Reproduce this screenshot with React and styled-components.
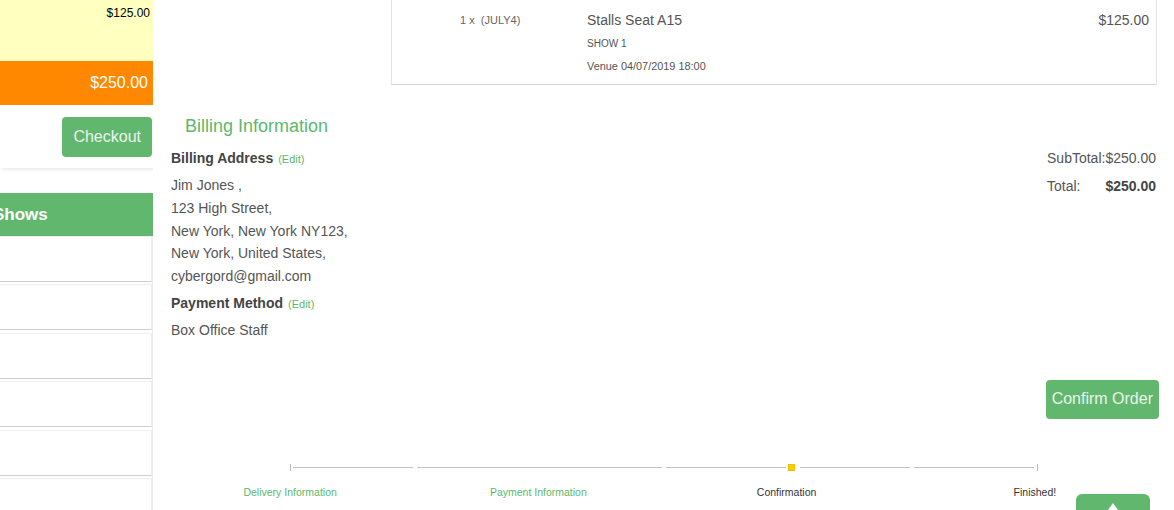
import React from 'react';
import styled, { createGlobalStyle } from 'styled-components';

const Global = createGlobalStyle`
  html, body { margin: 0; padding: 0; background: #fff; }
  body {
    font-family: "Liberation Sans", Arial, sans-serif;
    color: #555;
    overflow: hidden;
  }
  * { box-sizing: border-box; }
`;

const GREEN = '#62b76e';

const Page = styled.div`
  display: flex;
  width: 1174px;
  height: 510px;
  overflow: hidden;
`;

/* ---------- Sidebar ---------- */
const Sidebar = styled.aside`
  width: 153px;
  flex-shrink: 0;
  display: flex;
  flex-direction: column;
  overflow: hidden;
  & > * { flex-shrink: 0; }
`;

const CartLine = styled.div`
  height: 61px;
  background: #ffffc0;
  color: #000;
  font-size: 12px;
  line-height: 14px;
  text-align: right;
  padding: 6px 3px 0 0;
`;

const TotalBar = styled.div`
  height: 44px;
  background: #ff8800;
  color: #fff;
  font-size: 16px;
  display: flex;
  align-items: center;
  justify-content: flex-end;
  padding-right: 5px;
`;

const CheckoutBox = styled.div`
  height: 63px;
  display: flex;
  justify-content: flex-end;
  align-items: flex-start;
  padding: 12px 1px 0 0;
  box-shadow: 2px 2px 3px rgba(0, 0, 0, 0.08);
`;

const GreenButton = styled.button`
  background: ${GREEN};
  color: #eaf5ec;
  border: none;
  border-radius: 4px;
  font-family: "Liberation Sans", Arial, sans-serif;
  font-size: 16px;
  height: ${(p) => p.$h || 40}px;
  padding: 0 ${(p) => p.$px || 10}px;
  cursor: pointer;
`;

const ShowsHeader = styled.div`
  margin-top: 25px;
  height: 43px;
  background: ${GREEN};
  color: #fff;
  font-weight: bold;
  font-size: 17px;
  display: flex;
  align-items: center;
  span { margin-left: -7px; }
`;

const ShowList = styled.div`
  display: flex;
  flex-direction: column;
  border-right: 1px solid #ececec;
`;

const ShowItem = styled.div`
  height: 46px;
  flex-shrink: 0;
  background: #fff;
  border: 1px solid #efefef;
  border-bottom: 1px solid #cfcfcf;
  border-left: none;
  margin-bottom: 2.4px;
`;

/* ---------- Main ---------- */
const Main = styled.main`
  flex: 1;
  padding: 0 15px 0 13px;
  display: flex;
  flex-direction: column;
`;

const OrderCard = styled.div`
  margin-left: 225px;
  margin-right: 2px;
  height: 85px;
  border: 1px solid #e3e3e3;
  border-top: none;
  border-bottom-color: #d4d4d4;
  display: grid;
  grid-template-columns: 195px 1fr auto;
  padding-top: 12px;
`;

const Qty = styled.div`
  padding-left: 68px;
  margin-top: 2px;
  font-size: 11px;
  line-height: 13px;
  color: #666;
  white-space: pre;
`;

const ItemInfo = styled.div`
  display: flex;
  flex-direction: column;
`;

const ItemTitle = styled.div`
  font-size: 14px;
  line-height: 16px;
  color: #555;
`;

const ItemMeta = styled.div`
  font-size: ${(p) => p.$size}px;
  line-height: ${(p) => p.$lh}px;
  margin-top: ${(p) => p.$mt}px;
  color: #555;
`;

const ItemPrice = styled.div`
  font-size: 14px;
  line-height: 16px;
  padding-right: 7px;
  color: #555;
`;

const BillingRow = styled.div`
  display: flex;
  justify-content: space-between;
  margin-top: 31px;
`;

const BillingCol = styled.div`
  padding-left: 5px;
  display: flex;
  flex-direction: column;
`;

const SectionTitle = styled.h2`
  margin: 0 0 12px 14px;
  font-size: 18px;
  line-height: 20px;
  font-weight: normal;
  color: #5cb86c;
`;

const Label = styled.div`
  font-size: 14px;
  line-height: 20px;
  font-weight: bold;
  color: #444;
  margin-top: ${(p) => p.$mt || 0}px;
`;

const EditLink = styled.a`
  font-size: 11px;
  font-weight: normal;
  color: #5cb86c;
  margin-left: 5px;
  text-decoration: none;
`;

const Lines = styled.div`
  margin-top: 5px;
  font-size: 14px;
  line-height: 22.75px;
  color: #555;
`;

const Totals = styled.div`
  margin-right: 3px;
  padding-top: 32px;
  display: flex;
  flex-direction: column;
  gap: 8px;
  font-size: 14px;
  line-height: 20px;
  color: #555;
`;

const TotalLine = styled.div`
  display: flex;
  justify-content: space-between;
  b { color: #444; }
`;

const ConfirmRow = styled.div`
  display: flex;
  justify-content: flex-end;
  margin-top: 38px;
`;

const Progress = styled.div`
  margin-top: 45px;
  display: grid;
  grid-template-columns: repeat(4, 1fr);
`;

const Step = styled.div`
  display: flex;
  flex-direction: column;
  align-items: stretch;
`;

const Track = styled.div`
  height: 7px;
  display: flex;
  align-items: center;
  padding: 0 1px 0 3px;
`;

const Segment = styled.div`
  flex: ${(p) => p.$grow || 1};
  height: 1px;
  background: ${(p) => (p.$hidden ? 'transparent' : '#bcc2d1')};
`;

const Tick = styled.div`
  width: 1px;
  height: 7px;
  background: #bbb;
  margin: ${(p) => (p.$end ? '0 0 0 3px' : '0 2px 0 0')};
`;

const Current = styled.div`
  width: 7px;
  height: 7px;
  background: #ffcc00;
  border: 1px solid #f0bd00;
  margin: 0 5px 0 2px;
`;

const StepLabel = styled.div`
  margin-top: 15px;
  text-align: center;
  font-size: 10.5px;
  line-height: 12px;
  color: ${(p) => (p.$done ? '#5cb86c' : '#333')};
`;

const TopButton = styled.button`
  position: fixed;
  right: 24px;
  bottom: -24px;
  width: 74px;
  height: 40px;
  border: none;
  border-radius: 6px;
  background: ${GREEN};
  display: flex;
  align-items: center;
  justify-content: center;
  padding: 0;
`;

const steps = [
  { label: 'Delivery Information', done: true, kind: 'first' },
  { label: 'Payment Information', done: true, kind: 'mid' },
  { label: 'Confirmation', done: false, kind: 'current' },
  { label: 'Finished!', done: false, kind: 'last' },
];

function StepTrack({ kind }) {
  if (kind === 'first')
    return (
      <Track>
        <Segment $hidden />
        <Tick />
        <Segment />
      </Track>
    );
  if (kind === 'last')
    return (
      <Track>
        <Segment />
        <Tick $end />
        <Segment $hidden />
      </Track>
    );
  if (kind === 'current')
    return (
      <Track>
        <Segment $grow={1.1} />
        <Current />
        <Segment />
      </Track>
    );
  return (
    <Track>
      <Segment />
    </Track>
  );
}

export default function App() {
  return (
    <>
      <Global />
      <Page>
        <Sidebar>
          <CartLine>$125.00</CartLine>
          <TotalBar>$250.00</TotalBar>
          <CheckoutBox>
            <GreenButton $px={11}>Checkout</GreenButton>
          </CheckoutBox>
          <ShowsHeader>
            <span>Shows</span>
          </ShowsHeader>
          <ShowList>
            {[0, 1, 2, 3, 4, 5].map((i) => (
              <ShowItem key={i} />
            ))}
          </ShowList>
        </Sidebar>

        <Main>
          <OrderCard>
            <Qty>{'1 x  (JULY4)'}</Qty>
            <ItemInfo>
              <ItemTitle>Stalls Seat A15</ItemTitle>
              <ItemMeta $size={10} $lh={12} $mt={10}>SHOW 1</ItemMeta>
              <ItemMeta $size={10.9} $lh={13} $mt={9.5}>Venue 04/07/2019 18:00</ItemMeta>
            </ItemInfo>
            <ItemPrice>$125.00</ItemPrice>
          </OrderCard>

          <BillingRow>
            <BillingCol>
              <SectionTitle>Billing Information</SectionTitle>
              <Label>
                Billing Address<EditLink>(Edit)</EditLink>
              </Label>
              <Lines>
                <div>Jim Jones ,</div>
                <div>123 High Street,</div>
                <div>New York, New York NY123,</div>
                <div>New York, United States,</div>
                <div>cybergord@gmail.com</div>
              </Lines>
              <Label $mt={5}>
                Payment Method<EditLink>(Edit)</EditLink>
              </Label>
              <Lines>
                <div>Box Office Staff</div>
              </Lines>
            </BillingCol>
            <Totals>
              <TotalLine>
                <span>SubTotal:$250.00</span>
              </TotalLine>
              <TotalLine>
                <span>Total:</span>
                <b>$250.00</b>
              </TotalLine>
            </Totals>
          </BillingRow>

          <ConfirmRow>
            <GreenButton $h={39} $px={6}>Confirm Order</GreenButton>
          </ConfirmRow>

          <Progress>
            {steps.map((s) => (
              <Step key={s.label}>
                <StepTrack kind={s.kind} />
                <StepLabel $done={s.done}>{s.label}</StepLabel>
              </Step>
            ))}
          </Progress>
        </Main>
      </Page>
      <TopButton aria-label="Back to top">
        <svg width="14" height="14" viewBox="0 0 14 14" style={{ marginTop: -12 }}>
          <path d="M7 2 L12 9 H2 Z" fill="#fff" />
        </svg>
      </TopButton>
    </>
  );
}
